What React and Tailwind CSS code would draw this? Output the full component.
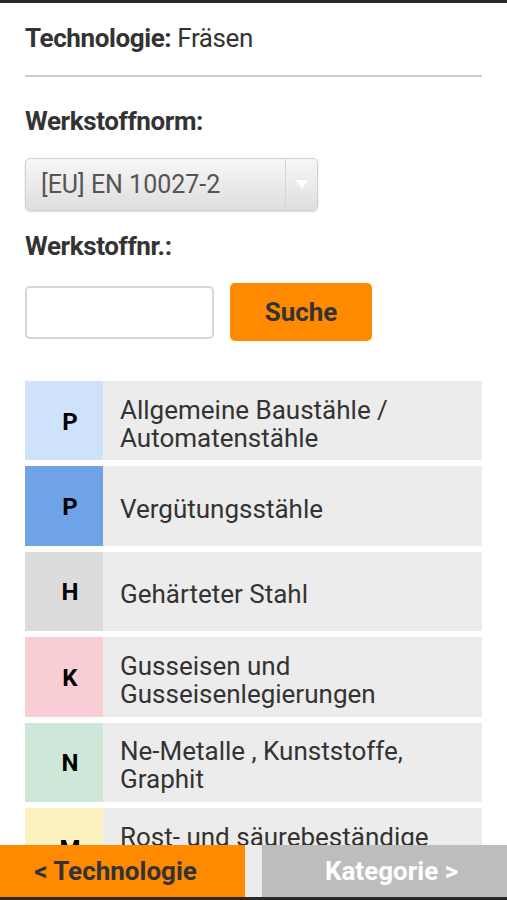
import React from "react";

const rows = [
  { l: "P", bg: "bg-[#cfe2fb]", t: ["Allgemeine Baustähle /", "Automatenstähle"] },
  { l: "P", bg: "bg-[#6fa3e8]", t: ["Vergütungsstähle"] },
  { l: "H", bg: "bg-[#dcdcdc]", t: ["Gehärteter Stahl"] },
  { l: "K", bg: "bg-[#f8cdd3]", t: ["Gusseisen und", "Gusseisenlegierungen"] },
  { l: "N", bg: "bg-[#cde8d9]", t: ["Ne-Metalle , Kunststoffe,", "Graphit"] },
  { l: "M", bg: "bg-[#fbf2c0]", t: ["Rost- und säurebeständige", "Stähle"] },
];

export default function App() {
  return (
    <div
      className="relative w-[507px] h-[900px] overflow-hidden bg-white border-t-[3px] border-b-[3px] border-[#2a2a2a] text-[#333]"
      style={{ fontFamily: "Roboto, 'Liberation Sans', sans-serif" }}
    >
      <div className="px-[25px] pt-[20px]">
        <div className="h-[30px] leading-[30px] text-[26px] tracking-[-0.4px]">
          <span className="font-bold">Technologie:</span> Fräsen
        </div>
        <div className="mt-[22px] h-[2px] bg-[#cccccc]" />
        <div className="mt-[29px] h-[30px] leading-[30px] text-[26px] font-bold tracking-[-0.4px]">Werkstoffnorm:</div>
        <div className="mt-[22px] flex h-[53px] w-[293px] rounded-[5px] border border-[#cfcfcf] bg-gradient-to-b from-[#f7f7f7] to-[#dedede] shadow-[0_1px_2px_rgba(0,0,0,0.15)]">
          <div className="flex flex-1 items-center pl-[15px] text-[25px] text-[#555]">[EU] EN 10027-2</div>
          <div className="flex w-[32px] items-center justify-center border-l border-[#d6d6d6]">
            <svg width="12" height="9" viewBox="0 0 12 9">
              <path d="M0 0 L12 0 L6 9 Z" fill="#ffffff" />
            </svg>
          </div>
        </div>
        <div className="mt-[20px] h-[30px] leading-[30px] text-[26px] font-bold tracking-[-0.4px]">Werkstoffnr.:</div>
        <div className="mt-[22px] flex items-center gap-[16px]">
          <div className="h-[53px] w-[189px] rounded-[5px] border-2 border-[#d6d6d6] bg-white" />
          <div className="flex h-[58px] w-[142px] items-center justify-center rounded-[5px] bg-[#ff8a00] text-[26px] font-bold text-[#333]">
            Suche
          </div>
        </div>
        <div className="mt-[40px] flex flex-col gap-[6px]">
          {rows.map((r, i) => (
            <div key={i} className="flex h-[79.4px] bg-[#ececec]">
              <div className={`flex w-[78px] items-center justify-center pl-[12px] pt-[2px] text-[24px] font-bold text-black ${r.bg}`}>
                {r.l}
              </div>
              <div className="flex flex-col justify-center pl-[17px] pt-[6px] text-[26px] leading-[28px] text-[#333]">
                {r.t.map((x, j) => (
                  <div key={j}>{x}</div>
                ))}
              </div>
            </div>
          ))}
        </div>
      </div>
      <div className="absolute bottom-0 left-0 right-0 flex h-[52px] bg-[#ececec]">
        <div className="flex w-[245px] items-center justify-center pr-[14px] bg-[#ff8a00] text-[26px] font-bold text-[#333]">
          &lt; Technologie
        </div>
        <div className="ml-auto flex w-[245px] items-center justify-center pl-[14px] bg-[#bdbdbd] text-[26px] font-bold text-white">
          Kategorie &gt;
        </div>
      </div>
    </div>
  );
}
